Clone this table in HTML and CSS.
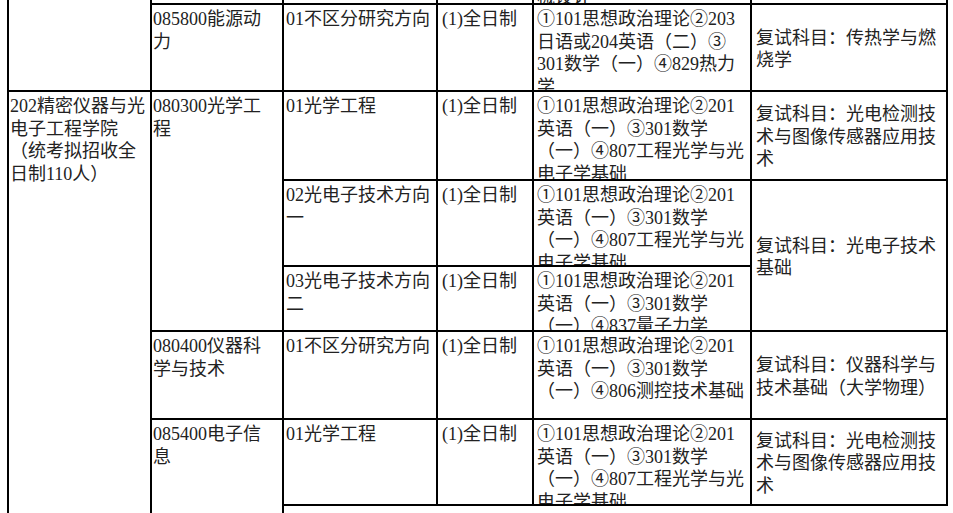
FILE: index.html
```html
<!DOCTYPE html>
<html lang="zh-CN">
<head>
<meta charset="utf-8">
<title>招生专业目录</title>
<link rel="stylesheet" href="styles.css">
</head>
<body>
<div class="sheet">
  <div class="catalog">
    <!-- row A (mostly scrolled out of view) -->
    <div class="cell c1 span2"></div>
    <div class="cell c2"></div>
    <div class="cell c3"></div>
    <div class="cell c4"></div>
    <div class="cell c5">①101思想政治理论②201英语（一）③301数学（一）④804机械原理与机械设计</div>
    <div class="cell c6"></div>

    <!-- row B -->
    <div class="cell c2">085800能源动力</div>
    <div class="cell c3">01不区分研究方向</div>
    <div class="cell c4">(1)全日制</div>
    <div class="cell c5">①101思想政治理论②203日语或204英语（二）③<wbr>301数学（一）④829热力学</div>
    <div class="cell c6 mid">复试科目：传热学与燃烧学</div>

    <!-- row C -->
    <div class="cell c1 span6">202精密仪器与光电子工程学院（统考拟招收全日制110人）</div>
    <div class="cell c2 span3">080300光学工程</div>
    <div class="cell c3">01光学工程</div>
    <div class="cell c4">(1)全日制</div>
    <div class="cell c5">①101思想政治理论②201英语（一）③301数学（一）④807工程光学与光电子学基础</div>
    <div class="cell c6 mid">复试科目：光电检测技术与图像传感器应用技术</div>

    <!-- row D -->
    <div class="cell c3">02光电子技术方向一</div>
    <div class="cell c4">(1)全日制</div>
    <div class="cell c5">①101思想政治理论②201英语（一）③301数学（一）④807工程光学与光电子学基础</div>
    <div class="cell c6 mid span2">复试科目：光电子技术基础</div>

    <!-- row E -->
    <div class="cell c3">03光电子技术方向二</div>
    <div class="cell c4">(1)全日制</div>
    <div class="cell c5">①101思想政治理论②201英语（一）③301数学（一）④837量子力学</div>

    <!-- row F -->
    <div class="cell c2">080400仪器科学与技术</div>
    <div class="cell c3">01不区分研究方向</div>
    <div class="cell c4">(1)全日制</div>
    <div class="cell c5">①101思想政治理论②201英语（一）③301数学（一）④806测控技术基础</div>
    <div class="cell c6 mid">复试科目：仪器科学与技术基础（大学物理）</div>

    <!-- row G -->
    <div class="cell c2 span2">085400电子信息</div>
    <div class="cell c3">01光学工程</div>
    <div class="cell c4">(1)全日制</div>
    <div class="cell c5">①101思想政治理论②201英语（一）③301数学（一）④807工程光学与光电子学基础</div>
    <div class="cell c6 mid">复试科目：光电检测技术与图像传感器应用技术</div>
  </div>
</div>
</body>
</html>
```

FILE: styles.css
```css
html, body {
  margin: 0;
  padding: 0;
  background: #ffffff;
  overflow: hidden;
}

.sheet {
  width: 953px;
  height: 513px;
  overflow: hidden;
}

.catalog {
  display: grid;
  grid-template-columns: 143px 132px 154px 96px 218px 196px;
  grid-template-rows: 90px 87px 89px 86px 65px 88px 86px 34px;
  margin-top: -85px;
  margin-left: 7px;
  width: max-content;
  border-left: 2px solid #000;
  font-family: "Liberation Serif", "Noto Sans CJK SC", serif;
  font-size: 18px;
  line-height: 22.5px;
  color: #222222;
}

.cell {
  box-sizing: border-box;
  border-right: 2px solid #000;
  border-bottom: 2px solid #000;
  overflow: hidden;
  padding-top: 3px;
  word-break: normal;
}

.c1 { padding-left: 1px; padding-right: 0; }
.c2 { padding-left: 1px; padding-right: 6px; }
.c3 { padding-left: 2px; padding-right: 0; }
.c4 { padding-left: 4px; padding-right: 0; }
.c5 { padding-left: 3px; padding-right: 2px; }
.c6 { padding-left: 4px; padding-right: 2px; }

.mid {
  display: flex;
  flex-direction: column;
  justify-content: center;
}

.span2 { grid-row: span 2; }
.span3 { grid-row: span 3; }
.span6 { grid-row: span 6; }
```
